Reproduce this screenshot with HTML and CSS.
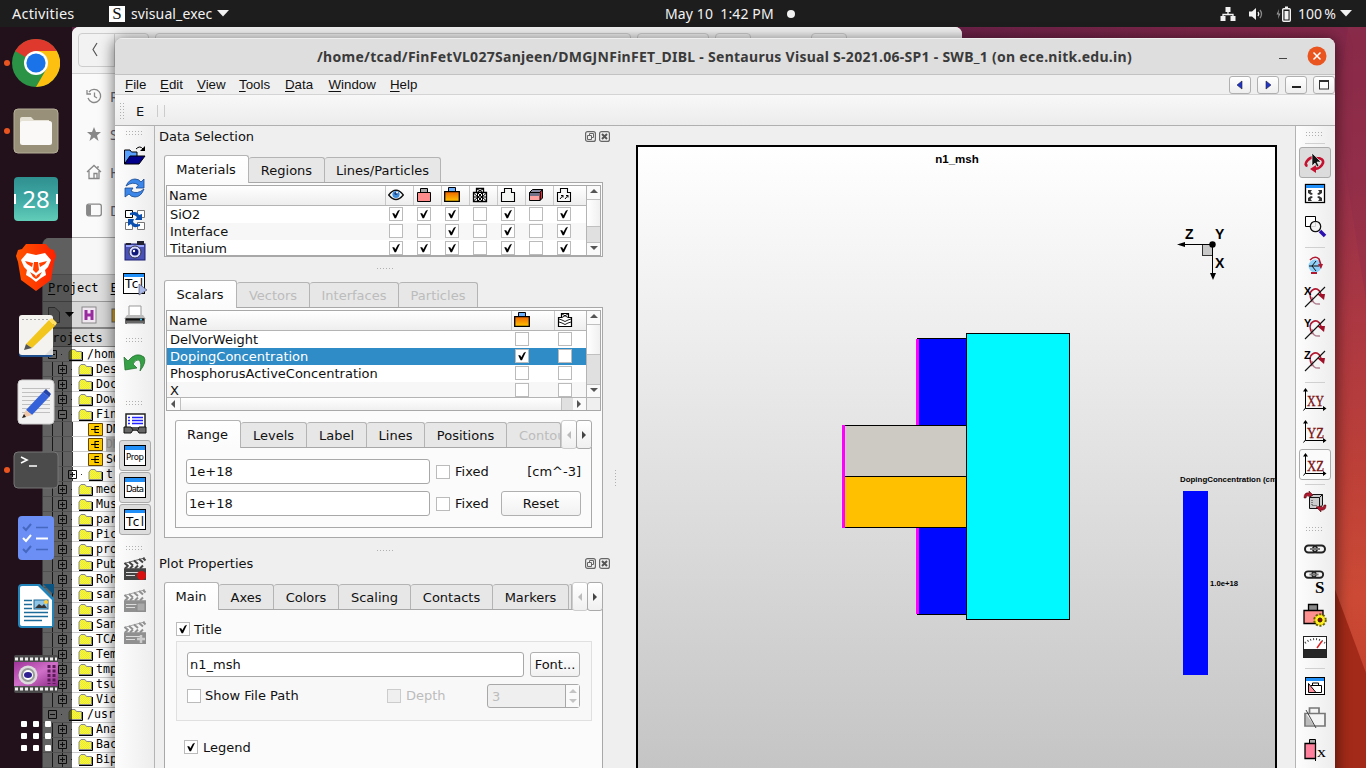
FILE: index.html
```html
<!DOCTYPE html>
<html lang="en">
<head>
<meta charset="utf-8">
<title>Sentaurus Visual</title>
<link rel="stylesheet" href="styles.css">
</head>
<body>
<svg class="defs" width="0" height="0">
  <defs>
    <linearGradient id="hot" x1="0" y1="0" x2="0" y2="1"><stop offset="0" stop-color="#f06400"/><stop offset="1" stop-color="#ffc400"/></linearGradient>
    <linearGradient id="tealg" x1="0" y1="0" x2="0" y2="1"><stop offset="0" stop-color="#2f9090"/><stop offset=".5" stop-color="#3fa8a4"/><stop offset="1" stop-color="#62cdb8"/></linearGradient>
    <linearGradient id="plotbg" x1="0" y1="0" x2="0" y2="1"><stop offset="0" stop-color="#fff"/><stop offset="1" stop-color="#c3c3c3"/></linearGradient>
    <linearGradient id="brave" x1="0" x2="1"><stop offset="0" stop-color="#ff5500"/><stop offset="1" stop-color="#ff2000"/></linearGradient>
    <linearGradient id="purp" x1="0" y1="0" x2="1" y2="1"><stop offset="0" stop-color="#a0339a"/><stop offset=".5" stop-color="#d070c8"/><stop offset="1" stop-color="#8a2a85"/></linearGradient>
    <pattern id="dither" width="2" height="2" patternUnits="userSpaceOnUse"><rect width="2" height="2" fill="#ffff00"/><rect width="1" height="1" fill="#e2e270"/><rect x="1" y="1" width="1" height="1" fill="#e2e270"/></pattern>
    <pattern id="dots" width="3" height="3" patternUnits="userSpaceOnUse"><rect width="1" height="1" fill="#b0b0b0"/></pattern>
  </defs>
  <symbol id="grip" viewBox="0 0 18 6"><rect width="18" height="6" fill="url(#dots)"/></symbol>
  <symbol id="tick" viewBox="0 0 14 14"><path d="M3.2 6.200 5.200 6.200 6.300 8.300 8.800 3.800 11 2.700 7 11.200 5.600 11.200Z" fill="#000"/></symbol>
  <symbol id="folder" viewBox="0 0 15 13"><path d="M1 11.500V4L3 1.500H7L8.500 3.500H13.500V11.500Z" fill="url(#dither)" stroke="#888"/><path d="M1 12.500H14.500V4" fill="none" stroke="#000"/></symbol>
  <symbol id="proj" viewBox="0 0 15 13"><path d="M.5.500H14.500V12.500H.5Z" fill="#fc0" stroke="#664400"/><path d="M3 6.500H7M7 3V10M7 3.500H11M7 6.500H11M7 9.500H11" stroke="#000" fill="none"/></symbol>
  <symbol id="plus" viewBox="0 0 9 9"><path d="M.5.500H8.500V8.500H.5ZM2 4.500H7M4.500 2V7" fill="none" stroke="#111"/></symbol>
  <symbol id="minus" viewBox="0 0 9 9"><path d="M.5.500H8.500V8.500H.5ZM2 4.500H7" fill="none" stroke="#111"/></symbol>
  <symbol id="eye" viewBox="0 0 16 16"><path d="M.7 8Q8-1.500 15.300 8Q8 17 .7 8Z" fill="#fff" stroke="#111" stroke-width="1.300"/><circle cx="8" cy="7.500" r="3.600" fill="#3e8ede"/><circle cx="8" cy="6.500" r="1.600" fill="#1b3f80"/><circle cx="9" cy="5.500" r="1" fill="#fff"/></symbol>
  <symbol id="pinkbox" viewBox="0 0 16 16"><path d="M4.500 1.500H11.500V6H4.500Z" fill="#aaa" stroke="#000"/><path d="M1.500 5.500H14.500V14.500H1.500Z" fill="#ff8c8c" stroke="#000"/></symbol>
  <symbol id="hotbox" viewBox="0 0 16 16"><path d="M4.500.5H11.500V5H4.500Z" fill="#6ab0ff" stroke="#000"/><path d="M.7 4.700H15.300V14.300H.7Z" fill="url(#hot)" stroke="#000" stroke-width="1.300"/></symbol>
  <symbol id="meshbox" viewBox="0 0 16 16"><path d="M4.500 1.500H11.500V5.500H14.500V14.500H1.500V5.500H4.500Z" fill="#fff" stroke="#000" stroke-width="1.300"/><path d="M4.500 5.500H11.500M5 2 11 5.500M11 2 5 5.500M1.500 10H14.500M5.500 5.500V14.500M10.500 5.500V14.500M1.500 6 6 10 1.500 14M14.500 6 10 10 14.500 14M6 6 10 10 6 14M10 6 6 10 10 14" fill="none" stroke="#000" stroke-width="1"/></symbol>
  <symbol id="outbox" viewBox="0 0 16 16"><path d="M4.500 5.500V1.500H11.500V5.500H14.500V14.500H1.500V5.500Z" fill="#f2f5f1" stroke="#000" stroke-width="1.100"/></symbol>
  <symbol id="cube" viewBox="0 0 16 16"><path d="M1.500 5.500 4.500 2.500H14.500L12 5.500Z" fill="#8888a0" stroke="#000"/><path d="M12 5.500 14.500 2.500V11L12 13.500Z" fill="#e03040" stroke="#000"/><path d="M1.500 5.500H12V13.500H1.500Z" fill="#ffa0a0" stroke="#000"/><path d="M2 6H11.500V9H2Z" fill="#707088"/></symbol>
  <symbol id="vecbox" viewBox="0 0 16 16"><path d="M4.500 5.500V1.500H11.500V5.500H14.500V14.500H1.500V5.500Z" fill="#f7f7f7" stroke="#000" stroke-width="1.100"/><path d="M4 12 7 8.500M5 8.500H7V10.500M9 12 12 8.500M10 8.500H12V10.500" fill="none" stroke="#000"/></symbol>
  <symbol id="wavebox" viewBox="0 0 16 16"><path d="M4.500 5.500V1.500H11.500V5.500H14.500V14.500H1.500V5.500Z" fill="#fff" stroke="#000" stroke-width="1.200"/><path d="M5 2 11 5.500M11 2 5 5.500M2 7 5 8 8 9.500 11 8 14 7M2 10 5 11 8 12.500 11 11 14 10" fill="none" stroke="#000" stroke-width=".9"/></symbol>
  <symbol id="float" viewBox="0 0 11 11"><rect x=".6" y=".6" width="9.800" height="9.800" rx="2" fill="none" stroke="#666" stroke-width="1.200"/><path d="M4.500 4V2.500H8.500V6.500H7M2.500 4.500H6.500V8.500H2.500Z" fill="none" stroke="#666"/></symbol>
  <symbol id="shut" viewBox="0 0 11 11"><rect x=".6" y=".6" width="9.800" height="9.800" rx="2" fill="none" stroke="#666" stroke-width="1.200"/><path d="M3 3 8 8M8 3 3 8" stroke="#555" stroke-width="2"/></symbol>
  <symbol id="clap" viewBox="0 0 24 24"><path d="M1 12H23V23H1Z" fill="currentColor"/><path d="M1 6.500 22 .8M1 11.500H23" stroke="currentColor" stroke-width=".8"/><path d="M1.500 6 5.500 9.500M6 5 10 8.500M11 3.500 15 7M16 2 20 5.500M20 1 22.500 3.500M2 11.500 5 9M7 11.500 10 8.500M12 11.500 15 8.500M17 11.500 20 8.500" stroke="currentColor" stroke-width="2"/><path d="M3 15.500H17M3 18.500H12" stroke="#ddd" stroke-width="1"/></symbol>
  <symbol id="rot" viewBox="0 0 24 24"><path d="M9.500 17Q4.500 8 9.500 5Q15 1.500 18 9" fill="none" stroke="#b01830" stroke-width="1.600"/><path d="M9 12Q9 20 17 19" fill="none" stroke="#b08090" stroke-width="1.500"/><path d="M14 9H22L21 15Z" fill="#a01028"/><path d="M2 22 22 2" stroke="#111" stroke-width="1.100"/></symbol>
  <symbol id="axes" viewBox="0 0 24 24"><path d="M2.500 1V20.500H22" fill="none" stroke="#000"/><path d="M2.500 0 5 3.500H0ZM23.500 20.500 20 18V23Z"/><path d="M2.500 20 .5 22.500" stroke="#000"/></symbol>
  <symbol id="chain" viewBox="0 0 24 12"><rect x="2" y="2.500" width="12" height="7" rx="3.500" fill="none" stroke="#222" stroke-width="2"/><rect x="10" y="2.500" width="12" height="7" rx="3.500" fill="none" stroke="#222" stroke-width="2"/><path d="M7 6H17" stroke="#777" stroke-width="2"/></symbol>
</svg>

<div class="desktop">
  <svg class="wallpaper" width="1366" height="768"><path d="M1330 576 1366 673V768H1330Z" fill="#a32a18"/><path d="M1336 110 1348 27H1366V300Z" fill="#8f2d48" opacity=".4"/></svg>

  <div class="files-window">
    <div class="files-head"><span class="back"><svg width="35" height="32"><path d="M18 9 14 15.500 18 22" fill="none" stroke="#555" stroke-width="1.200"/></svg></span><span class="crumb c1"></span><span class="crumb c2"></span><span class="crumb c3"></span><span class="crumb c4"></span></div>
    <div class="place"><svg width="16" height="16" fill="none" stroke="#888" stroke-width="1.300"><path d="M3 4A6.500 6.500 0 1 1 2 10M1 2V6H5M8.500 4.500V8.500L11 10"/></svg>Recent</div>
    <div class="place"><svg width="16" height="16"><path d="M8 1 10 6H15L11 9.500 12.500 15 8 11.500 3.500 15 5 9.500 1 6H6Z" fill="#888"/></svg>Starred</div>
    <div class="place"><svg width="16" height="16" fill="none" stroke="#888" stroke-width="1.300"><path d="M1 8 8 1.500 15 8M3 7V14.500H13V7M8 14V9.500H11V14M12 4V2"/></svg>Home</div>
    <div class="place"><svg width="16" height="14"><rect x=".7" y="1.200" width="14.600" height="11.600" rx="2" fill="none" stroke="#888" stroke-width="1.300"/><path d="M1 2H5V12.500H1Z" fill="#888"/></svg>Desktop</div>
  </div>

  <div class="swb-window">
    <div class="swb-title"></div>
    <div class="swb-menu"><span><u>P</u>roject</span><span><u>E</u></span></div>
    <div class="swb-tools">
      <svg width="72" height="18"><path d="M5.500 1.500H12L16.500 6V16.500H5.500Z" fill="#c0c0c0" stroke="#666"/><path d="M22 6H31L26.500 11Z" fill="#000"/><rect x="39" y="1" width="14" height="16" fill="#f0e8f0" stroke="#888"/><path d="M43 4V14M49 4V14M43 9H49" stroke="#9a2aa0" stroke-width="3"/><rect x="69" y="3" width="12" height="13" fill="#d8a020" stroke="#666"/></svg>
    </div>
    <div class="swb-head">Projects</div>
    <div class="tree">
      <div class="node d0"><svg class="pm"><use href="#minus"/></svg><svg class="fo"><use href="#folder"/></svg>/hom</div>
      <div class="node"><svg class="pm"><use href="#plus"/></svg><svg class="fo"><use href="#folder"/></svg>Des</div>
      <div class="node"><svg class="pm"><use href="#plus"/></svg><svg class="fo"><use href="#folder"/></svg>Doc</div>
      <div class="node"><svg class="pm"><use href="#plus"/></svg><svg class="fo"><use href="#folder"/></svg>Dow</div>
      <div class="node"><svg class="pm"><use href="#minus"/></svg><svg class="fo"><use href="#folder"/></svg>Fin</div>
      <div class="node d2 leaf"><svg class="fo"><use href="#proj"/></svg>DM</div>
      <div class="node d2 leaf"><svg class="fo"><use href="#proj"/></svg><span class="picked">DM</span></div>
      <div class="node d2 leaf"><svg class="fo"><use href="#proj"/></svg>SG</div>
      <div class="node d2"><svg class="pm"><use href="#plus"/></svg><svg class="fo"><use href="#folder"/></svg>t</div>
      <div class="node"><svg class="pm"><use href="#plus"/></svg><svg class="fo"><use href="#folder"/></svg>med</div>
      <div class="node"><svg class="pm"><use href="#plus"/></svg><svg class="fo"><use href="#folder"/></svg>Mus</div>
      <div class="node"><svg class="pm"><use href="#plus"/></svg><svg class="fo"><use href="#folder"/></svg>par</div>
      <div class="node"><svg class="pm"><use href="#plus"/></svg><svg class="fo"><use href="#folder"/></svg>Pic</div>
      <div class="node"><svg class="pm"><use href="#plus"/></svg><svg class="fo"><use href="#folder"/></svg>pro</div>
      <div class="node"><svg class="pm"><use href="#plus"/></svg><svg class="fo"><use href="#folder"/></svg>Pub</div>
      <div class="node"><svg class="pm"><use href="#plus"/></svg><svg class="fo"><use href="#folder"/></svg>Roh</div>
      <div class="node"><svg class="pm"><use href="#plus"/></svg><svg class="fo"><use href="#folder"/></svg>san</div>
      <div class="node"><svg class="pm"><use href="#plus"/></svg><svg class="fo"><use href="#folder"/></svg>san</div>
      <div class="node"><svg class="pm"><use href="#plus"/></svg><svg class="fo"><use href="#folder"/></svg>San</div>
      <div class="node"><svg class="pm"><use href="#plus"/></svg><svg class="fo"><use href="#folder"/></svg>TCA</div>
      <div class="node"><svg class="pm"><use href="#plus"/></svg><svg class="fo"><use href="#folder"/></svg>Tem</div>
      <div class="node"><svg class="pm"><use href="#plus"/></svg><svg class="fo"><use href="#folder"/></svg>tmp</div>
      <div class="node"><svg class="pm"><use href="#plus"/></svg><svg class="fo"><use href="#folder"/></svg>tsu</div>
      <div class="node"><svg class="pm"><use href="#plus"/></svg><svg class="fo"><use href="#folder"/></svg>Vid</div>
      <div class="node d0"><svg class="pm"><use href="#minus"/></svg><svg class="fo"><use href="#folder"/></svg>/usr</div>
      <div class="node"><svg class="pm"><use href="#plus"/></svg><svg class="fo"><use href="#folder"/></svg>Ana</div>
      <div class="node"><svg class="pm"><use href="#plus"/></svg><svg class="fo"><use href="#folder"/></svg>Bac</div>
      <div class="node"><svg class="pm"><use href="#plus"/></svg><svg class="fo"><use href="#folder"/></svg>Bip</div>
    </div>
  </div>

  <nav class="launcher">
    <div class="app run"><svg width="48" height="48" viewBox="0 0 48 48"><circle cx="24" cy="24" r="24" fill="#2a9346"/><path d="M24 24 3.200 12A24 24 0 0 1 44.800 12Z" fill="#df382c"/><path d="M24 12H44.800A24 24 0 0 1 24 48L34.400 30Z" fill="#fdc010"/><path d="M24 24 3.200 12 13.600 30Z" fill="#2a9346"/><path d="M24 12V24L13.600 18 3.200 12Z" fill="#df382c"/><circle cx="24" cy="24" r="12" fill="#fff"/><circle cx="24" cy="24" r="9.600" fill="#1a73e8"/></svg></div>
    <div class="app run"><svg width="46" height="46" viewBox="0 0 46 46"><rect x="1" y="1" width="44" height="44" rx="4" fill="#989078" stroke="#b5ae98"/><path d="M7 11Q7 9 9 9H18L21 12H36V22H7Z" fill="#e5e1d5"/><rect x="7" y="13" width="32" height="24" rx="2.500" fill="#faf9f7"/></svg></div>
    <div class="app"><svg width="46" height="46" viewBox="0 0 46 46"><rect x="1" y="1" width="44" height="44" rx="4" fill="url(#tealg)"/><path d="M2 18V28M44 18V28" stroke="#fff" stroke-width="2"/><text x="23" y="32" class="cal">28</text></svg></div>
    <div class="app"><svg width="48" height="50" viewBox="0 0 48 50"><path d="M14 2H34L38 7 42 8 44 14 42 20 39 38 24 49 9 38 6 20 4 14 6 8 10 7Z" fill="url(#brave)"/><path d="M15 11 24 13 33 11 39 18 36 25 33 28 34 33 29 36 24 40 19 36 14 33 15 28 12 25 9 18Z" fill="#fff"/><path d="M13 19 21 21 20 25 15 22ZM35 19 27 21 28 25 33 22ZM22 20H26L27 28 24 31 21 28ZM18 30 23 33 24 35 25 33 30 30 27 35 24 37 21 35Z" fill="#ff4000"/></svg></div>
    <div class="app"><svg width="48" height="48" viewBox="0 0 48 48"><rect x="7" y="6" width="34" height="40" rx="3" fill="#1f4f8c"/><rect x="7" y="4" width="34" height="40" rx="3" fill="#f5f3ef"/><path d="M10 8.500H38" stroke="#aaa" stroke-dasharray="2 2"/><path d="M14 33 37 9 43 15 20 37Z" fill="#f2c61c"/><path d="M37 9 40 7 45 12 43 15Z" fill="#ffe060"/><path d="M14 33 12 39 20 37Z" fill="#555"/><path d="M33 44 41 36V44Z" fill="#ddd"/></svg></div>
    <div class="app"><svg width="48" height="48" viewBox="0 0 48 48"><rect x="6" y="2" width="36" height="44" rx="4" fill="#f1f1f1" stroke="#ccc"/><path d="M10 10.500H38M10 14.500H38M10 18.500H38M10 22.500H38M10 26.500H38M10 30.500H38M10 34.500H38" stroke="#c0c0c0"/><path d="M14 32 31 14 37 19 20 37Z" fill="#3562d8"/><path d="M31 14 34 11 39 16 37 19Z" fill="#2344a8"/><path d="M14 32 10 40 20 37Z" fill="#f0c8a8"/><path d="M12 36 10 40 14 39Z" fill="#222"/></svg></div>
    <div class="app run"><svg width="46" height="40" viewBox="0 0 46 40"><rect x="1" y="2" width="44" height="36" rx="4" fill="#4b4b4b" stroke="#777"/><path d="M8 7 14 10 8 13M16 16H24" fill="none" stroke="#fff" stroke-width="1.600"/></svg></div>
    <div class="app"><svg width="48" height="48" viewBox="0 0 48 48"><rect x="6" y="2" width="36" height="44" rx="4" fill="#6b8ff5"/><path d="M24 13.500H36M24 35.500H36" stroke="#4668c0" stroke-width="1.600"/><path d="M11 13 14 16 19 10M11 35 14 38 19 32" fill="none" stroke="#4668c0" stroke-width="2"/><path d="M11 24 14 27 19 21M24 24.500H36" fill="none" stroke="#fff" stroke-width="2"/></svg></div>
    <div class="app"><svg width="48" height="48" viewBox="0 0 48 48"><path d="M10 2H28L42 16V42Q42 46 38 46H10Q6 46 6 42V6Q6 2 10 2Z" fill="#2384ba"/><path d="M10 4H26L40 18V44H10Q8 44 8 42V6Q8 4 10 4Z" fill="#fff"/><path d="M31 2H42V13Z" fill="#0b5380"/><path d="M12 18.500H20M12 22.500H20M12 26.500H20M12 30.500H36M12 34.500H36M12 38.500H30" stroke="#1c6b99" stroke-width="1.600"/><rect x="22" y="18" width="14" height="9" fill="#8fc4e4" stroke="#1c6b99"/><path d="M23 26 27 22 30 24 32 22 35 26Z" fill="#333"/><circle cx="34" cy="20" r="2" fill="#fc3"/></svg></div>
    <div class="app"><svg width="46" height="40" viewBox="0 0 46 40"><rect x="1" y="1" width="44" height="38" rx="2" fill="#4a4a4a"/><path d="M2 5H44M2 35H44" stroke="#eee" stroke-width="3" stroke-dasharray="3 2"/><rect x="1" y="8" width="44" height="24" fill="url(#purp)"/><path d="M36 11V30M41 11V30" stroke="#5a1a58" stroke-width="3" stroke-dasharray="3 1.500"/><circle cx="15" cy="21" r="9.500" fill="#ddd"/><circle cx="15" cy="21" r="7" fill="#999"/><circle cx="15" cy="21" r="5" fill="#fff"/><ellipse cx="15" cy="21" rx="4" ry="3" fill="#302090"/></svg></div>
    <div class="app grid"><svg width="32" height="32" fill="#fff"><rect x="1" y="1" width="6" height="6" rx="1"/><rect x="13" y="1" width="6" height="6" rx="1"/><rect x="25" y="1" width="6" height="6" rx="1"/><rect x="1" y="13" width="6" height="6" rx="1"/><rect x="13" y="13" width="6" height="6" rx="1"/><rect x="25" y="13" width="6" height="6" rx="1"/><rect x="1" y="25" width="6" height="6" rx="1"/><rect x="13" y="25" width="6" height="6" rx="1"/><rect x="25" y="25" width="6" height="6" rx="1"/></svg></div>
  </nav>

  <header class="topbar">
    <span class="activities">Activities</span>
    <span class="slogo">S</span><span class="appname">svisual_exec</span><svg class="caret" width="12" height="7"><path d="M0 0H12L6 6.500Z" fill="#f2f2f2"/></svg>
    <span class="clock">May 10&ensp;1:42 PM</span><i class="bead"></i>
    <span class="tray">
      <svg width="16" height="16" fill="#f2f2f2"><path d="M5.500 1H10.500V6H5.500ZM.5 10H5.500V15H.5ZM10.500 10H15.500V15H10.500Z"/><path d="M8 6V8.500M3 10V8.500H13V10" fill="none" stroke="#f2f2f2" stroke-width="1.300"/></svg>
      <svg width="16" height="16"><path d="M1 5.500H4L8 2V14L4 10.500H1Z" fill="#f2f2f2"/><path d="M10 6Q11.500 8 10 10" fill="none" stroke="#f2f2f2" stroke-width="1.300"/><path d="M12 4Q15 8 12 12" fill="none" stroke="#888" stroke-width="1.300"/></svg>
      <svg width="16" height="16"><path d="M3 3 .5 8.500H2.500L2 13 4.500 7.500H2.500Z" fill="#999"/><rect x="6.700" y="2.700" width="7.600" height="12.600" rx="1" fill="none" stroke="#f2f2f2" stroke-width="1.400"/><path d="M8.500 5H12.500V13.500H8.500ZM9 .5H12V2H9Z" fill="#f2f2f2"/></svg>
      <span class="pct">100&thinsp;%</span><svg width="12" height="7"><path d="M0 0H12L6 6.500Z" fill="#f2f2f2"/></svg>
    </span>
  </header>

  <main class="win">
    <div class="titlebar"><span class="wtitle">/home/tcad/FinFetVL027Sanjeen/DMGJNFinFET_DIBL - Sentaurus Visual S-2021.06-SP1 - SWB_1 (on ece.nitk.edu.in)</span><i class="mini"></i><svg class="wclose" width="20" height="20"><circle cx="10" cy="10" r="9.500" fill="#e9541f"/><path d="M6.500 6.500 13.500 13.500M13.500 6.500 6.500 13.500" stroke="#fff" stroke-width="1.500"/></svg></div>
    <div class="menubar">
      <span class="m-file"><u>F</u>ile</span><span class="m-edit"><u>E</u>dit</span><span class="m-view"><u>V</u>iew</span><span class="m-tools"><u>T</u>ools</span><span class="m-data"><u>D</u>ata</span><span class="m-window"><u>W</u>indow</span><span><u>H</u>elp</span>
      <div class="mdi">
        <b><svg width="20" height="16"><path d="M12 4V12L7 8Z" fill="#2034c8" stroke="#223" stroke-width=".6"/></svg></b>
        <b><svg width="20" height="16"><path d="M8 4V12L13 8Z" fill="#2034c8" stroke="#223" stroke-width=".6"/></svg></b>
        <b><svg width="20" height="16"><path d="M6 10H15" stroke="#222" stroke-width="2"/></svg></b>
        <b><svg width="20" height="16"><rect x="5.500" y="4" width="9" height="8" fill="#fff" stroke="#333"/><path d="M5 4H15" stroke="#333" stroke-width="2"/></svg></b>
      </div>
    </div>
    <div class="toolrow"><svg width="5" height="17"><rect width="5" height="17" fill="url(#dots)"/></svg><span>E</span><i></i><i></i></div>

    <div class="body">
      <aside class="tb left">
        <div class="s h14"><svg width="18" height="6"><use href="#grip"/></svg></div>
        <div class="s"><svg width="24" height="24"><path d="M1.500 20V6H7L8.500 8H14V12" fill="#58a0ff" stroke="#000"/><path d="M1.500 20 7 12H22L16 20Z" fill="#00008c" stroke="#000"/><path d="M13 5Q17 1 20 5" fill="none" stroke="#000"/><path d="M22 2V7H17Z"/></svg></div>
        <div class="s"><svg width="24" height="24"><path d="M3 10Q6 3 12 3Q16 3 18 6L21 3V12H13L15.500 9Q10 5 3 10Z" fill="#3b86e8" stroke="#17478f" stroke-width=".8"/><path d="M21 13Q18 21 12 21Q8 21 6 18L2 21V12H10L8 15Q14 19 21 13Z" fill="#3b86e8" stroke="#17478f" stroke-width=".8"/></svg></div>
        <div class="s"><svg width="24" height="24"><path d="M2.500 2.500H9.500V9.500H2.500Z" fill="#fff" stroke="#000"/><path d="M14.500 2.500H21.500V9.500H14.500ZM2.500 14.500H9.500V21.500H2.500ZM14.500 14.500H21.500V21.500H14.500Z" fill="#fff" stroke="#777"/><path d="M7 5Q14 2 16 7L19 6V12H12L14 9Q11 6 7 7ZM17 18Q10 21 8 16L5 18V11H11L10 14Q12 17 17 16Z" fill="#0a4fb0"/></svg></div>
        <div class="s"><svg width="24" height="24"><rect x="2" y="4" width="20" height="16" fill="#4a52b8" stroke="#1c1f70"/><path d="M3 3H8V5H3ZM14 1H21V5H14Z" fill="#223"/><path d="M3 6H21" stroke="#9aa6ff" stroke-width="2"/><circle cx="12" cy="12" r="6" fill="#d8dcff" stroke="#334"/><circle cx="12" cy="12" r="3.500" fill="#101878"/><circle cx="11" cy="11" r="1.200" fill="#fff"/></svg></div>
        <div class="s"><svg width="24" height="24"><rect x=".5" y="1.500" width="21" height="20" fill="#fff" stroke="#000"/><path d="M1 2H21V5H1Z" fill="#2090f8"/><text x="2" y="16" class="t12" textLength="18">Tcl</text><path d="M16 12 24 18 16 23Z" fill="#a8b8e8" stroke="#556" stroke-width=".7"/></svg></div>
        <div class="s"><svg width="24" height="24"><path d="M6 2H18V12H6Z" fill="#fff" stroke="#999"/><path d="M4 11H20L23 15H1Z" fill="#bbb"/><rect x="2" y="14" width="20" height="6" rx="1" fill="#666"/><path d="M3 15.500H21" stroke="#111" stroke-width="2"/><path d="M4 20H20" stroke="#eee"/><circle cx="18" cy="15.500" r="1" fill="#4cf"/></svg></div>
        <div class="s h16"><svg width="18" height="6"><use href="#grip"/></svg></div>
        <div class="s h30"><svg width="24" height="24"><path d="M1 6 5 10Q13 0 21 6Q24 11 17 20Q19 12 16 9Q13 8 10 13L14 17 2 19Z" fill="#35a045" stroke="#1b6a28" stroke-width=".7"/></svg></div>
        <div class="s h30 low"><svg width="18" height="6"><use href="#grip"/></svg></div>
        <div class="s"><svg width="24" height="24"><rect x="3" y="2" width="19" height="14" fill="#fff" stroke="#222" stroke-width="1.500"/><path d="M9 5.500H20M9 8.500H20M9 11.500H20M5 5.500H7M5 8.500H7M5 11.500H7" stroke="#22f" stroke-width="1.400"/><path d="M1 15H8L10 18H15L16 15H23V21H16L14 18H10L8 21H1Z" fill="#666" stroke="#111"/></svg></div>
        <div class="s on"><svg width="24" height="24"><rect x="1.500" y="1.500" width="21" height="20" fill="#fff" stroke="#000"/><path d="M2 2H22V6H2Z" fill="#2090f8"/><text x="3" y="16" class="t9" textLength="18">Prop</text></svg></div>
        <div class="s on"><svg width="24" height="24"><rect x="1.500" y="1.500" width="21" height="20" fill="#fff" stroke="#000"/><path d="M2 2H22V6H2Z" fill="#2090f8"/><text x="3" y="16" class="t9" textLength="18">Data</text></svg></div>
        <div class="s on"><svg width="24" height="24"><rect x="1.500" y="1.500" width="21" height="20" fill="#fff" stroke="#000"/><path d="M2 2H22V5H2Z" fill="#2090f8"/><text x="3" y="18" class="t12" textLength="18">Tcl</text></svg></div>
        <div class="s h17"><svg width="18" height="6"><use href="#grip"/></svg></div>
        <div class="s dk"><svg width="24" height="24"><use href="#clap"/><circle cx="18.500" cy="18.500" r="4.500" fill="#d81010"/></svg></div>
        <div class="s dim"><svg width="24" height="24"><use href="#clap"/><rect x="14" y="14" width="8" height="8" fill="#aaa" stroke="#888"/></svg></div>
        <div class="s dim"><svg width="24" height="24"><use href="#clap"/><path d="M18 14V22M14 18H22" stroke="#ccc" stroke-width="2.500"/></svg></div>
      </aside>

      <section class="panel">
        <div class="dtitle first"><span>Data Selection</span><svg width="11" height="11"><use href="#float"/></svg><svg width="11" height="11"><use href="#shut"/></svg></div>
        <div class="tabs"><span class="tab cur w85">Materials</span><span class="tab w76">Regions</span><span class="tab w116">Lines/Particles</span></div>
        <div class="pane p1">
          <div class="table mat">
            <div class="cols">
              <div class="hd"><span>Name</span><svg><use href="#eye"/></svg><svg><use href="#pinkbox"/></svg><svg><use href="#hotbox"/></svg><svg><use href="#meshbox"/></svg><svg><use href="#outbox"/></svg><svg><use href="#cube"/></svg><svg><use href="#vecbox"/></svg></div>
              <div class="row"><span>SiO2</span><i><svg><use href="#tick"/></svg></i><i><svg><use href="#tick"/></svg></i><i><svg><use href="#tick"/></svg></i><i></i><i><svg><use href="#tick"/></svg></i><i></i><i><svg><use href="#tick"/></svg></i></div>
              <div class="row alt"><span>Interface</span><i></i><i></i><i><svg><use href="#tick"/></svg></i><i></i><i><svg><use href="#tick"/></svg></i><i></i><i><svg><use href="#tick"/></svg></i></div>
              <div class="row"><span>Titanium</span><i><svg><use href="#tick"/></svg></i><i><svg><use href="#tick"/></svg></i><i><svg><use href="#tick"/></svg></i><i></i><i><svg><use href="#tick"/></svg></i><i></i><i><svg><use href="#tick"/></svg></i></div>
            </div>
            <div class="vs"><b><svg width="8" height="4"><path d="M0 4 4 0 8 4Z" fill="#555"/></svg></b><em></em><b><svg width="8" height="4"><path d="M0 0H8L4 4Z" fill="#555"/></svg></b></div>
          </div>
        </div>
        <div class="split"><svg width="18" height="1"><use href="#grip" width="18" height="6"/></svg></div>
        <div class="tabs"><span class="tab cur w73">Scalars</span><span class="tab off w73">Vectors</span><span class="tab off w89">Interfaces</span><span class="tab off w79">Particles</span></div>
        <div class="pane p2">
          <div class="table sca">
            <div class="cols">
              <div class="hd"><span>Name</span><svg><use href="#hotbox"/></svg><svg><use href="#wavebox"/></svg></div>
              <div class="row"><span>DelVorWeight</span><i></i><i></i></div>
              <div class="row sel"><span>DopingConcentration</span><i><svg><use href="#tick"/></svg></i><i></i></div>
              <div class="row"><span>PhosphorusActiveConcentration</span><i></i><i></i></div>
              <div class="row alt cut"><span>X</span><i></i><i></i></div>
            </div>
            <div class="vs"><b><svg width="8" height="4"><path d="M0 4 4 0 8 4Z" fill="#555"/></svg></b><em></em><b><svg width="8" height="4"><path d="M0 0H8L4 4Z" fill="#555"/></svg></b></div>
            <div class="hs"><b><svg width="4" height="8"><path d="M4 0V8L0 4Z" fill="#555"/></svg></b><em></em><b><svg width="4" height="8"><path d="M0 0V8L4 4Z" fill="#555"/></svg></b></div>
            <div class="corner"></div>
          </div>
          <div class="tabs inner"><span class="tab cur w66">Range</span><span class="tab w66">Levels</span><span class="tab w60">Label</span><span class="tab w58">Lines</span><span class="tab w82">Positions</span><span class="tab off w54 clip">Contou</span><span class="arr dis"><svg width="4" height="8"><path d="M4 0V8L0 4Z" fill="#bbb"/></svg></span><span class="arr"><svg width="4" height="8"><path d="M0 0V8L4 4Z" fill="#444"/></svg></span></div>
          <div class="pane range">
            <div class="frow"><span class="field f244">1e+18</span><i class="cb"></i><span class="fx">Fixed</span><span class="unit">[cm^-3]</span></div>
            <div class="frow"><span class="field f244">1e+18</span><i class="cb"></i><span class="fx">Fixed</span><span class="btn reset">Reset</span></div>
          </div>
        </div>
        <div class="split s2"><svg width="18" height="1"><use href="#grip" width="18" height="6"/></svg></div>
        <div class="dtitle"><span>Plot Properties</span><svg width="11" height="11"><use href="#float"/></svg><svg width="11" height="11"><use href="#shut"/></svg></div>
        <div class="tabs"><span class="tab cur w55">Main</span><span class="tab w55">Axes</span><span class="tab w65">Colors</span><span class="tab w72">Scaling</span><span class="tab w82">Contacts</span><span class="tab w76">Markers</span><span class="tab w3"></span><span class="arr dis"><svg width="4" height="8"><path d="M4 0V8L0 4Z" fill="#bbb"/></svg></span><span class="arr"><svg width="4" height="8"><path d="M0 0V8L4 4Z" fill="#444"/></svg></span></div>
        <div class="pane p3">
          <div class="chk"><i class="cb"><svg><use href="#tick"/></svg></i>Title</div>
          <div class="group">
            <div class="grow"><span class="field f337">n1_msh</span><span class="btn font">Font...</span></div>
            <div class="grow two"><i class="cb"></i><span class="sfp">Show File Path</span><i class="cb gray"></i><span class="depth">Depth</span><span class="spin"><span>3</span><em><svg width="8" height="14"><path d="M0 4 4 0 8 4ZM0 10H8L4 14Z" fill="#c4c4c4"/></svg></em></span></div>
          </div>
          <div class="chk legend"><i class="cb"><svg><use href="#tick"/></svg></i>Legend</div>
        </div>
      </section>

      <div class="vsplit"><svg width="1" height="18"><rect width="1" height="18" fill="url(#dots)"/></svg></div>

      <section class="view">
        <svg width="641" height="623" viewBox="636 145 641 623">
          <rect x="637" y="146" width="639" height="640" fill="url(#plotbg)" stroke="#000" stroke-width="2"/>
          <text x="957" y="163" class="ptitle">n1_msh</text>
          <g shape-rendering="crispEdges" stroke="#000">
            <rect x="917.500" y="338.500" width="49" height="276" fill="#0008ff"/>
            <rect x="843.500" y="425.500" width="123" height="51" fill="#cdcac3"/>
            <rect x="843.500" y="476.500" width="123" height="51" fill="#ffc000"/>
            <rect x="966.500" y="333.500" width="103" height="286" fill="#00f8ff"/>
            <path d="M917.500 339V425M917.500 528V614M843.500 425V528" stroke="#f0f" stroke-width="3"/>
          </g>
          <g shape-rendering="crispEdges"><rect x="1202.500" y="244.500" width="10" height="11" fill="#c8c8c8" stroke="#333"/><path d="M1184 244.500H1213M1212.500 245V275" stroke="#000"/></g>
          <circle cx="1212.500" cy="244.500" r="3.200"/><path d="M1177 244.500 1185 242V247ZM1213 280 1210 273H1216Z"/>
          <text x="1185" y="239" class="ax">Z</text><text x="1215" y="239" class="ax">Y</text><text x="1215" y="268" class="ax">X</text>
          <text x="1180" y="482" class="lg" textLength="97" lengthAdjust="spacingAndGlyphs">DopingConcentration (cm</text>
          <rect x="1183" y="491" width="25" height="184" fill="#0008ff"/>
          <text x="1210" y="586" class="lg2" textLength="28" lengthAdjust="spacingAndGlyphs">1.0e+18</text>
          <path d="M1276 145V768" stroke="#000" stroke-width="2"/>
        </svg>
      </section>

      <aside class="tb right">
        <div class="s h16"><svg width="18" height="6"><use href="#grip"/></svg></div>
        <div class="sep h4"></div>
        <div class="s on"><svg width="24" height="24"><path d="M4.500 15Q1 14 4 10Q8 5 13 7Q21 7 20 12Q18 17 12 18" fill="none" stroke="#c41230" stroke-width="2.600"/><path d="M7 18 13 14V22Z" fill="#c41230"/><path d="M9 2V15L12 12 14 16 16 15 14 11H18Z" fill="#111" stroke="#fff" stroke-width=".6"/></svg></div>
        <div class="s"><svg width="24" height="24"><rect x="2.500" y="2.500" width="19" height="18" fill="#fff" stroke="#000" stroke-width="1.300"/><path d="M3 3H21V6H3Z" fill="#2090f8"/><path d="M5 8H9L7.500 10 10 12 8 13 5 11ZM19 8H15L16.500 10 14 12 16 13 19 11ZM5 19H9L7.500 17 10 15 8 14 5 16ZM19 19H15L16.500 17 14 15 16 14 19 16Z" fill="#333"/></svg></div>
        <div class="s"><svg width="24" height="24"><path d="M2.500 2.500H12.500V12.500H2.500Z" fill="#fff" stroke="#000"/><circle cx="12.500" cy="12.500" r="5.200" fill="#f4f4f4" fill-opacity=".85" stroke="#111" stroke-width="1.300"/><path d="M17 17 22 22" stroke="#2a10b0" stroke-width="3.500"/></svg></div>
        <div class="sep h7"></div>
        <div class="s"><svg width="24" height="24"><circle cx="12" cy="13" r="6.500" fill="#8fd0f8"/><path d="M6 13H16M13 8 9 13 13 18" stroke="#111" fill="none"/><path d="M7 7Q12 2 16 6L18 12" stroke="#b01830" stroke-width="1.600" fill="none"/><path d="M15 11H20L18 16ZM8 19H14V21H8Z" fill="#b01830"/></svg></div>
        <div class="s"><svg width="24" height="24"><use href="#rot"/><text x="1" y="10" class="xyz">X</text></svg></div>
        <div class="s"><svg width="24" height="24"><use href="#rot"/><text x="1" y="10" class="xyz">Y</text></svg></div>
        <div class="s"><svg width="24" height="24"><use href="#rot"/><text x="1" y="10" class="xyz">Z</text></svg></div>
        <div class="sep h7"></div>
        <div class="s"><svg width="24" height="24"><use href="#axes"/><text x="4" y="17.500" class="pl" textLength="17" lengthAdjust="spacingAndGlyphs">XY</text></svg></div>
        <div class="s"><svg width="24" height="24"><use href="#axes"/><text x="4" y="17.500" class="pl" textLength="17" lengthAdjust="spacingAndGlyphs">YZ</text></svg></div>
        <div class="s on lite"><svg width="24" height="24"><use href="#axes"/><text x="4" y="17.500" class="pl" textLength="17" lengthAdjust="spacingAndGlyphs">XZ</text></svg></div>
        <div class="sep h5"></div>
        <div class="s"><svg width="24" height="24"><path d="M6.500 8.500H16.500V19.500H6.500ZM6.500 8.500 10 5.500H19.500V16L16.500 19.500M16.500 8.500 19.500 5.500" fill="#ccc" stroke="#111"/><path d="M9 11V16.500H14" fill="none" stroke="#333" stroke-dasharray="1 1"/><path d="M1 9Q1 3 6 4V2L10 6 6 8V7Q3 6 3 9ZM23 16Q23 22 18 21V23L13 18 18 17V18Q21 19 21 16Z" fill="#b01830" stroke="#400" stroke-width=".5"/></svg></div>
        <div class="s h16 low"><svg width="18" height="6"><use href="#grip"/></svg></div>
        <div class="s"><svg width="24" height="12"><use href="#chain"/></svg></div>
        <div class="s h34"><svg width="24" height="32" viewBox="0 0 24 32"><use href="#chain" width="22" height="11" y="3"/><text x="12" y="27" class="bigs">S</text></svg></div>
        <div class="s"><svg width="24" height="24"><path d="M5.500 1.500H14.500V8H5.500Z" fill="#888" stroke="#000" stroke-width="1.300"/><path d="M1 7.500H20V20.500H1Z" fill="#ff9090" stroke="#000" stroke-width="1.300"/><circle cx="17" cy="17" r="5.500" fill="#ec0" stroke="#660" stroke-width="2.500" stroke-dasharray="2 1.500"/><circle cx="17" cy="17" r="4.800" fill="#fe2"/><circle cx="17" cy="17" r="2" fill="#900" stroke="#220"/></svg></div>
        <div class="s"><svg width="24" height="24"><rect x=".5" y="1.500" width="23" height="21" fill="#fff" stroke="#222"/><path d="M1 14H23V22H1Z" fill="#262626"/><path d="M2 8Q12 0 22 8" fill="none" stroke="#444" stroke-width="2" stroke-dasharray="1 2"/><path d="M14 13 19 6" stroke="#d22" stroke-width="1.500"/></svg></div>
        <div class="sep h7"></div>
        <div class="s"><svg width="24" height="24"><rect x="2.500" y="3.500" width="19" height="17" fill="#fff" stroke="#000"/><path d="M3 4H21V7H3Z" fill="#2090f8"/><path d="M6 10 13 18.500H6Z" fill="#ff90a0"/><path d="M9.500 11.500V9H15.500V11.500H18.500V18.500H5.500V9.500L13 18.500M8 11.500H18" fill="none" stroke="#000"/></svg></div>
        <div class="s"><svg width="24" height="24"><path d="M6.500 7.500V2H16V7.500M2 7.500H22V20H2Z" fill="#f4f4f4" stroke="#777" stroke-width="1.700"/><path d="M3 8 11 19H3Z" fill="#bbb"/><path d="M3 4 13 22" stroke="#444"/></svg></div>
        <div class="s"><svg width="24" height="24"><path d="M6.500 1.500H12.500V6H6.500Z" fill="#aaa" stroke="#000"/><path d="M2 5.500H12.500V20.500H2Z" fill="#ff809c" stroke="#000" stroke-width="1.300"/><path d="M12.500 2V23" stroke="#000"/><text x="14" y="19" class="smx" textLength="9" lengthAdjust="spacingAndGlyphs">x</text></svg></div>
      </aside>
    </div>
  </main>
</div>
</body>
</html>
```
FILE: styles.css
```css
* { box-sizing: border-box; }
html, body { margin: 0; height: 100%; overflow: hidden; }
body { font: 13px/17px "DejaVu Sans", sans-serif; color: #111; }
i, em { font-style: normal; }
b { font-weight: normal; }
svg { display: block; flex: none; }
.defs { position: absolute; }
.desktop { position: relative; width: 1366px; height: 768px; overflow: hidden; background: linear-gradient(90deg, #50203c, #6a2146 70%, transparent 96%), linear-gradient(180deg, #84284a 30px, #96304a 180px, #ab3842 320px, #bd4038 470px, #cc4a35 600px, #b83a25); }
.wallpaper { position: absolute; left: 0; top: 0; }

.topbar { position: absolute; left: 0; top: 0; width: 1366px; height: 27px; background: #1d1d1d; color: #f2f2f2; font: 14.500px/27px "Noto Sans", sans-serif; display: flex; align-items: center; }
.activities { width: 97px; padding-left: 12px; letter-spacing: .2px; white-space: nowrap; }
.slogo { margin-left: 12px; width: 16px; height: 16px; background: #fff; color: #111; font: 17px/16px "Liberation Serif", serif; text-align: center; }
.appname { width: 92px; padding-left: 6px; white-space: nowrap; font-size: 14px; letter-spacing: .12px; }
.caret { margin: -1px 0 0 0; }
.clock { margin-left: 436px; width: 122px; font-size: 14px; white-space: nowrap; letter-spacing: .13px; }
.bead { width: 8px; height: 8px; border-radius: 50%; background: #f2f2f2; }
.tray { margin-left: auto; display: flex; align-items: center; gap: 12px; padding-right: 14px; }
.pct { margin-left: -6px; margin-right: -8px; font-size: 14px; white-space: nowrap; }

.launcher { position: absolute; left: 0; top: 27px; width: 72px; height: 741px; background: rgba(8, 10, 8, .64); padding-top: 2px; display: flex; flex-direction: column; }
.app { height: 67.900px; display: flex; align-items: center; justify-content: center; position: relative; flex: none; }
.app.grid { height: 56px; }
.app.run::before { content: ""; position: absolute; left: 4px; top: 31px; width: 6px; height: 6px; border-radius: 50%; background: #e95420; }
.cal { font: 24px "Noto Sans", sans-serif; fill: #fff; text-anchor: middle; }

.files-window { position: absolute; left: 72px; top: 27px; width: 890px; height: 211px; background: #fafafa; border-radius: 7px 7px 0 0; border-bottom: 1px solid #aaa; font: 14px "Noto Sans", sans-serif; color: #667; overflow: hidden; }
.files-head { height: 47px; background: #f2f2f2; border-bottom: 1px solid #d0d0d0; display: flex; padding: 6px 6px; }
.back { width: 71px; height: 34px; border: 1px solid #cdcdcd; border-radius: 4px; background: linear-gradient(90deg, transparent 35px, #cdcdcd 35px, #cdcdcd 36px, transparent 36px); }
.crumb { height: 34px; border: 1px solid #cdcdcd; border-radius: 4px; margin-left: 6px; }
.c1 { width: 476px; } .c2 { width: 72px; } .c3 { width: 36px; } .c4 { width: 36px; margin-left: 60px; }
.place { height: 38px; display: flex; align-items: center; gap: 8px; padding-left: 14px; }
.place:nth-child(2) { margin-top: 3px; }

.swb-window { position: absolute; left: 42px; top: 238px; width: 200px; height: 530px; background: #fff; border-radius: 7px 0 0 0; border-left: 1px solid #999; overflow: hidden; font: 12px/15px "DejaVu Sans Mono", monospace; color: #000; }
.swb-title { height: 36px; background: #f7f7f7; }
.swb-menu { height: 27px; background: #dedede; border-top: 1px solid #bbb; display: flex; gap: 12px; padding: 6px 5px; }
.swb-tools { height: 26px; background: #d8d8d8; border-top: 1px solid #999; padding: 4px 0; }
.swb-head { height: 20px; background: #d8d8d8; border-top: 2px solid #888; border-bottom: 1px solid #888; padding: 2px 2px; }
.tree { background: #fff; }
.node { height: 15.040px; display: flex; align-items: center; border-bottom: 1px solid #ccc; padding-left: 15px; font-size: 11.600px; white-space: nowrap; background: linear-gradient(#333, #333) 9px 0 / 1px 100% no-repeat, linear-gradient(#333, #333) 19px 0 / 1px 100% no-repeat; }
.node.d0 { padding-left: 5px; background: none; }
.node.d2 { padding-left: 25px; background: linear-gradient(#333, #333) 9px 0 / 1px 100% no-repeat, linear-gradient(#333, #333) 19px 0 / 1px 100% no-repeat, linear-gradient(#333, #333) 29px 0 / 1px 100% no-repeat; }
.pm { width: 9px; height: 9px; margin-right: 11px; background: linear-gradient(#333, #333) 9px 4px / 10px 1px no-repeat, #fff; }
.node .pm { box-shadow: 9px 0 0 -4px #333; }
.fo { width: 15px; height: 13px; margin-right: 3px; }
.d0 .fo { margin-right: 4px; }
.leaf .fo { margin-left: 20px; }
.picked { background: #bbb; color: #999; }

.win { position: absolute; left: 115px; top: 38px; width: 1220px; height: 740px; background: #efefef; border-radius: 8px 8px 0 0; box-shadow: 0 2px 14px 2px rgba(0, 0, 0, .5); overflow: hidden; }
.titlebar { height: 37px; background: #dedede; border-bottom: 1px solid #c2c2c2; border-top: 1px solid #eee; display: flex; align-items: center; padding-left: 202px; color: #3a3a3a; font: bold 14px/34px "Noto Sans", sans-serif; }
.wtitle { width: 962px; white-space: nowrap; letter-spacing: .278px; }
.mini { width: 8px; height: 1px; background: #444; margin-top: 4px; }
.wclose { margin-left: 20px; margin-top: -2px; }
.menubar { height: 20px; display: flex; font: 13.300px/19px "Liberation Sans", sans-serif; padding-left: 10px; border-bottom: 1px solid #d4d4d4; }
.m-file { width: 35px; } .m-edit { width: 37px; } .m-view { width: 42px; } .m-tools { width: 46px; } .m-data { width: 43.500px; } .m-window { width: 61.500px; }
u { text-underline-offset: 2px; }
.mdi { margin-left: auto; display: flex; gap: 6px; padding-top: 1px; }
.mdi b { width: 22px; height: 18px; border: 1px solid #b0b0b0; border-radius: 3px; background: linear-gradient(#fff, #eee); }
.toolrow { height: 31px; display: flex; align-items: center; background: linear-gradient(#f8f8f8, #ececec); border-bottom: 1px solid #b0b0b0; padding: 2px 0 0 5px; font-size: 13px; }
.toolrow span { margin: 0 13px 0 11px; }
.toolrow i { width: 1px; height: 12px; background: #ccc; margin-right: 6px; }
.body { display: flex; height: 642px; }
.tb { width: 40px; background: linear-gradient(90deg, #fdfdfd, #ededed); display: flex; flex-direction: column; flex: none; }
.left { border-right: 1px solid #b4b4b4; }
.right { border-left: 1px solid #b4b4b4; margin-left: auto; padding-right: 1px; }
.s { height: 32px; flex: none; display: flex; align-items: center; justify-content: center; }
.s.on { height: 31px; width: 32px; margin: 0 auto 1px 3.500px; background: #dcdcdc; border: 1px solid #aaa; border-radius: 3px; }
.right .s.on { margin: 1px auto 0 3px; }
.s.on.lite { background: #fbfbfb; }
.s.h14 { height: 14px; padding-top: 2px; } .s.h16 { height: 16px; padding-top: 2px; } .s.h17 { height: 17px; padding-top: 8px; } .s.h30 { height: 30px; } .s.h34 { height: 34px; }
.s.h30.low { padding-top: 22px; } .s.h16.low { padding-top: 10px; }
.sep { width: 20px; margin: 0 auto; border-bottom: 1px solid #d0d0d0; }
.h4 { height: 2px; margin-bottom: 2px; } .h7 { height: 6px; margin-bottom: 1px; } .h5 { height: 5px; }
.dk { color: #444; } .dim { color: #909090; }
.t9 { font: 8.500px "DejaVu Sans", sans-serif; } .t12 { font: 12px "DejaVu Sans", sans-serif; }
.xyz { font: bold 11px "Liberation Sans", sans-serif; }
.pl { font: 14px "Liberation Serif", serif; fill: #7a1010; stroke: #7a1010; stroke-width: .3px; }
.bigs { font: bold 17px "Liberation Serif", serif; }
.smx { font: 15px "Liberation Serif", serif; }

.panel { width: 449px; padding-left: 9px; flex: none; }
.dtitle { height: 20px; margin: 0 -6px 9px -5px; display: flex; align-items: center; gap: 3px; }
.dtitle.first { height: 21px; margin-bottom: 8px; }
.dtitle span { margin-right: auto; }
.tabs { height: 27px; width: 439px; display: flex; align-items: flex-end; position: relative; }
.tab { height: 25px; border: 1px solid #b4b4b4; border-left: 0; border-bottom: 0; border-radius: 3px 3px 0 0; background: #e7e7e7; text-align: center; line-height: 26px; flex: none; white-space: nowrap; }
.tab.cur { height: 28px; margin-bottom: -1px; line-height: 27px; border-left: 1px solid #aaa; background: linear-gradient(#fff, #fbfbfb); z-index: 1; padding-right: 1px; }
.tab.off { color: #bcbcbc; }
.tab.clip { text-align: left; padding-left: 12px; overflow: hidden; }
.w3 { width: 3px; } .w54 { width: 54px; } .w55 { width: 55px; } .w58 { width: 58px; } .w60 { width: 60px; } .w65 { width: 65px; } .w66 { width: 66px; } .w72 { width: 72px; } .w73 { width: 73px; } .w76 { width: 76px; } .w79 { width: 79px; } .w82 { width: 82px; } .w85 { width: 85px; } .w89 { width: 89px; } .w116 { width: 116px; }
.arr { width: 16px; height: 29px; margin-bottom: -2px; margin-right: -1px; border: 1px solid #aaa; border-radius: 3px; background: linear-gradient(#fff, #f0f0f0); display: flex; align-items: center; justify-content: center; z-index: 2; }
.dis { border-color: #ccc; }
.pane { border: 1px solid #a8a8a8; background: #fbfbfb; width: 439px; padding: 2px 1px 1px; }
.p1 { height: 75px; }
.table { border: 1px solid #a8a8a8; background: #fff; display: grid; grid-template-columns: 1fr 14px; overflow: hidden; height: 71px; }
.mat { grid-template-rows: 69px; }
.cols { overflow: hidden; }
.hd { height: 20px; border-bottom: 1px solid #b4b4b4; background: linear-gradient(#fff, #eee); display: grid; align-items: center; }
.hd span { padding-left: 2px; }
.hd svg { width: 19px; height: 19px; border: solid #c8c8c8; border-width: 0 0 0 1px; padding: 1px 0 2px 2px; }
.row { height: 17px; display: grid; align-items: center; }
.row span { padding-left: 3px; line-height: 16px; }
.mat .hd, .mat .row { grid-template-columns: 218px repeat(7, 28px); }
.sca .hd, .sca .row { grid-template-columns: 344px 43px 31px; }
.row i { width: 14px; height: 14px; border: 1px solid #bbb; background: #fff; margin: -1px 0 0 4px; }
.row i svg, .cb svg { width: 14px; height: 14px; margin: -1px; }
.alt { background: #f7f7f7; }
.row.sel { background: #308cc6; color: #fff; }
.vs { border-left: 1px solid #b4b4b4; display: flex; flex-direction: column; background: #e0e0e0; }
.vs b, .hs b { width: 13px; height: 13px; background: #fafafa; display: flex; align-items: center; justify-content: center; flex: none; }
.vs b:first-child { padding-bottom: 3px; }
.vs em { background: linear-gradient(90deg, #fff, #f0f0f0); border: solid #c0c0c0; border-width: 1px 0; height: 28px; margin-bottom: auto; }
.sca .vs em { height: 31px; }
.vs b:last-child { border-top: 1px solid #c0c0c0; padding-bottom: 2px; }
.split { height: 23px; display: flex; justify-content: center; padding: 11px 0 0; width: 443px; }
.split.s2 { height: 15px; padding-top: 12px; }
.p2 { height: 231px; }
.sca { grid-template-rows: 86px 13px; height: 101px; }
.hs { border-top: 1px solid #b4b4b4; display: flex; background: #e0e0e0; height: 13px; }
.hs b { height: 12px; padding-right: 2px; }
.hs em { width: 382px; border: solid #c0c0c0; border-width: 0 1px; background: linear-gradient(#fff, #f0f0f0); margin-right: auto; }
.corner { border: solid #b4b4b4; border-width: 1px 0 0 1px; background: #efefef; }
.tabs.inner { margin: 9px 0 0 9px; width: 417px; height: 27px; }
.range { width: 417px; height: 81px; margin-left: 9px; padding: 11px 10px; }
.frow { height: 25px; margin-bottom: 7px; display: flex; align-items: center; }
.field { height: 25px; border: 1px solid #a8a8a8; border-radius: 3px; background: #fff; line-height: 23px; padding-left: 2px; }
.f244 { width: 244px; } .f337 { width: 337px; }
.cb { width: 14px; height: 14px; border: 1px solid #bbb; background: #fff; flex: none; }
.frow .cb { margin: 0 5px 0 6px; }
.unit { margin-left: auto; }
.btn { height: 25px; border: 1px solid #b0b0b0; border-radius: 3px; background: linear-gradient(#fff, #f1f1f1); text-align: center; line-height: 23px; }
.reset { width: 80px; margin-left: auto; }
.p3 { height: 200px; padding: 12px 11px; }
.chk { display: flex; align-items: center; height: 14px; gap: 4px; }
.group { width: 416px; height: 80px; margin-top: 5px; border: 1px solid #e0e0e0; background: #f8f8f8; padding: 10px; }
.grow { display: flex; align-items: center; height: 25px; }
.font { width: 50px; margin-left: 6px; }
.two { margin-top: 6px; }
.sfp { width: 186px; padding-left: 4px; }
.cb.gray { border-color: #ccc; background: #efefef; }
.depth { width: 86px; padding-left: 5px; color: #bcbcbc; }
.spin { width: 93px; height: 24px; border: 1px solid #a8a8a8; border-radius: 3px; background: #efefef; color: #bcbcbc; display: flex; line-height: 24px; }
.spin span { flex: 1; padding-left: 4px; }
.spin em { width: 14px; border-left: 1px solid #a8a8a8; background: #fafafa; display: flex; align-items: center; justify-content: center; }
.legend { margin: 19px 0 0 8px; gap: 5px; }
.vsplit { width: 18px; padding: 344px 0 0 11px; }
.view { padding-top: 19px; margin-left: 14px; }
.ptitle { font: bold 11.500px "Liberation Sans", sans-serif; text-anchor: middle; }
.ax { font: bold 14px "Liberation Sans", sans-serif; }
.lg, .lg2 { font: bold 7.500px "Liberation Sans", sans-serif; }
```
